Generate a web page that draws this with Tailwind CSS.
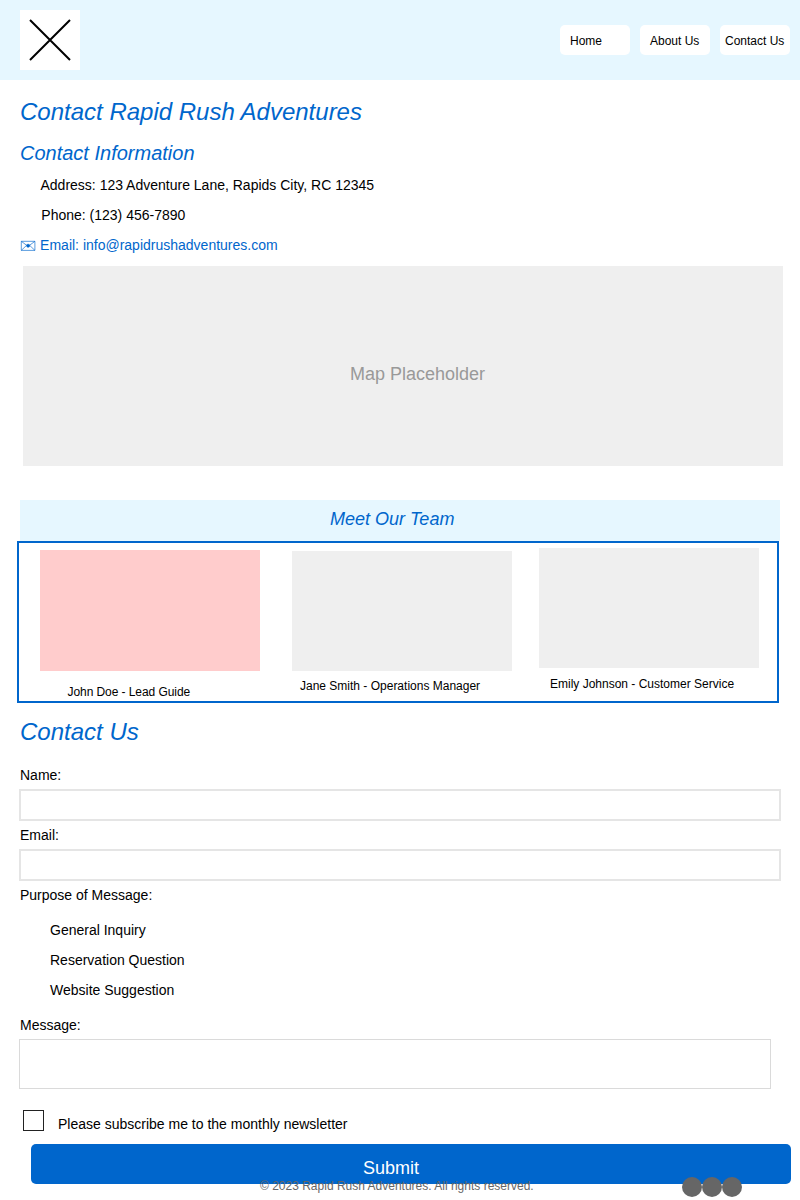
<!DOCTYPE html>
<html lang="en">
<head>
<meta charset="utf-8">
<title>Contact Rapid Rush Adventures</title>
<script src="https://cdn.jsdelivr.net/npm/@tailwindcss/browser@4"></script>
</head>
<body class="w-[800px] h-[1200px] overflow-hidden bg-white text-black font-['Liberation_Sans',Arial,sans-serif] text-[14px]">
<header class="flex h-20 items-start justify-between bg-[#e6f7ff] pl-5 pr-2.5 pt-2.5">
  <div class="size-[60px] bg-white">
    <svg class="block" width="60" height="60" viewBox="0 0 60 60" stroke="#000" stroke-width="2"><path d="M10 10L50 50M50 10L10 50"/></svg>
  </div>
  <nav class="mt-[15px] flex gap-2.5 text-xs leading-[14px] whitespace-nowrap">
    <a class="h-[30px] w-[70px] rounded-[5px] bg-white pl-2.5 pt-[9px]">Home</a>
    <a class="h-[30px] w-[70px] rounded-[5px] bg-white pl-2.5 pt-[9px]">About Us</a>
    <a class="h-[30px] w-[70px] rounded-[5px] bg-white pl-[5px] pt-[9px]">Contact Us</a>
  </nav>
</header>
<main>
  <section class="pt-4">
    <h1 class="pl-5 text-2xl leading-[31px] italic text-[#0066cc]">Contact Rapid Rush Adventures</h1>
    <h2 class="mt-[11px] pl-5 text-xl leading-[30px] italic text-[#0066cc]">Contact Information</h2>
    <div class="mt-0.5 leading-[30px]">
      <p class="h-[30px] pl-[40.5px]">Address: 123 Adventure Lane, Rapids City, RC 12345</p>
      <p class="h-[30px] pl-[41.3px]">Phone: (123) 456-7890</p>
      <p class="flex h-[30px] pl-5 text-[#0066cc]">
        <svg class="mr-[4.1px] mt-[10px] block" width="16" height="12" viewBox="0 0 16 12" fill="none" stroke="#0066cc" stroke-width=".65"><path d="M1.3 1.3H14.9V10.4H1.3ZM1.3 1.3L8.1 6.4L14.9 1.3M1.3 10.4L6.4 5.5M14.9 10.4L9.8 5.5"/><circle cx="8.1" cy="5.7" r="1.5" fill="#0066cc"/></svg>
        <span>Email: info@rapidrushadventures.com</span>
      </p>
    </div>
    <div class="ml-[22.5px] mt-[6px] h-[200px] w-[760px] bg-[#efefef] pl-[327.5px] pt-[98px] text-lg leading-5 text-[#999]">Map Placeholder</div>
  </section>
  <section class="mt-[34px]">
    <h2 class="ml-5 h-[41px] w-[760px] bg-[#e6f7ff] pl-[310px] pt-[9px] text-lg leading-5 italic text-[#0066cc]">Meet Our Team</h2>
    <div class="ml-[17px] flex h-[162px] w-[762px] border-2 border-[#0066cc] text-xs leading-[14px]">
      <div class="ml-[21px] mt-[7px] w-[220px]">
        <div class="h-[120.5px] bg-[#ffcccc]"></div>
        <p class="mt-[14.5px] pl-[27.5px] tracking-[-0.07px]">John Doe - Lead Guide</p>
      </div>
      <div class="ml-[31.5px] mt-2 w-[220px]">
        <div class="h-[120px] bg-[#efefef]"></div>
        <p class="mt-2 pl-[8.5px]">Jane Smith - Operations Manager</p>
      </div>
      <div class="ml-[27.5px] mt-[5px] w-[220px]">
        <div class="h-[120px] bg-[#efefef]"></div>
        <p class="mt-[9px] pl-[11px]">Emily Johnson - Customer Service</p>
      </div>
    </div>
  </section>
  <form class="pt-[13px] leading-[30px]">
    <h2 class="mb-[13px] pl-5 text-2xl leading-[31px] italic text-[#0066cc]">Contact Us</h2>
    <label class="block h-[29px] pl-5">Name:</label>
    <div class="ml-[19px] h-8 w-[762px] border-2 border-[#e5e5e5]"></div>
    <label class="-mt-px block h-[29px] pl-5">Email:</label>
    <div class="ml-[19px] h-8 w-[762px] border-2 border-[#e5e5e5]"></div>
    <p class="-mt-px mb-[5px] h-[30px] pl-5">Purpose of Message:</p>
    <p class="h-[30px] pl-[50px]">General Inquiry</p>
    <p class="h-[30px] pl-[50px]">Reservation Question</p>
    <p class="h-[30px] pl-[50px]">Website Suggestion</p>
    <label class="mt-[5px] block h-[29px] pl-5">Message:</label>
    <div class="ml-[19px] h-[50px] w-[752px] border border-[#dadada]"></div>
    <div class="mt-[20px] flex h-[34px] pl-[23px] pt-px">
      <div class="size-[21px] border border-[#222]"></div>
      <span class="-mt-px ml-[14px]">Please subscribe me to the monthly newsletter</span>
    </div>
    <div class="ml-[30.5px] mt-[1px] h-10 w-[760px] rounded-[5px] bg-[#0066cc] pl-[332.5px] pt-[14px] text-lg leading-5 text-white">Submit</div>
  </form>
</main>
<footer class="relative -mt-[7px] flex h-5 pl-[260px] text-xs leading-[14px] text-[#666]">
  <p class="mt-[2px] w-[422px]">© 2023 Rapid Rush Adventures. All rights reserved.</p>
  <div class="flex"><i class="size-5 rounded-full bg-[#666]"></i><i class="size-5 rounded-full bg-[#666]"></i><i class="size-5 rounded-full bg-[#666]"></i></div>
</footer>
</body>
</html>
